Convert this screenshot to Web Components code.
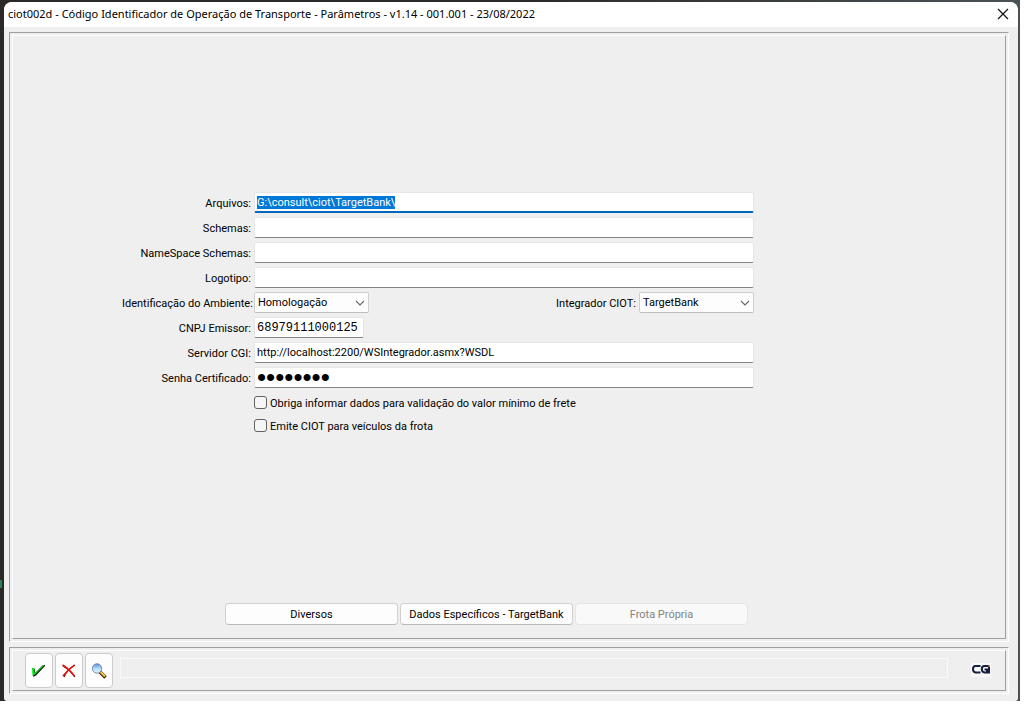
<!DOCTYPE html>
<html lang="pt-BR">
<head>
<meta charset="utf-8">
<title>ciot002d</title>
<style>
  html { background: #fff; }
  body { margin: 0; min-height: 100vh; box-sizing: border-box; padding: 0 4px 5px 0; display: flex; font: 11px/16px Roboto, "Liberation Sans", sans-serif; color: #000; }
  ciot-desktop { flex: 1; }
</style>
</head>
<body>
<ciot-desktop>
  <app-window heading="ciot002d - Código Identificador de Operação de Transporte - Parâmetros - v1.14 - 001.001 - 23/08/2022">
    <params-form></params-form>
    <tool-bar></tool-bar>
  </app-window>
</ciot-desktop>
<script>
const define = (name, html, setup) => customElements.define(name, class extends HTMLElement {
  connectedCallback() {
    if (this.shadowRoot) return;
    const root = this.attachShadow({ mode: 'open' });
    root.innerHTML = html;
    if (setup) setup(this, root);
  }
});

define('ciot-desktop', `
<style>
  :host { display: flex; box-sizing: border-box; padding: 2px 2px 0 4px;
    background: linear-gradient(#2f7f5c, #2f7f5c) 0 580px / 2px 8px no-repeat,
      linear-gradient(90deg, #2b2928 0 50%, #4a5154 99%); }
  ::slotted(*) { flex: 1; }
</style>
<slot></slot>`);

define('app-window', `
<style>
  :host { display: flex; flex-direction: column; min-width: 0; background: #efefef; border-radius: 8px 8px 3px 3px; overflow: hidden; }
  header { display: flex; align-items: center; justify-content: space-between; box-sizing: border-box; height: 25px; background: #fff; padding: 0 9px 1px 4px; }
  h1 { margin: 0; font: 11px/16px "Noto Sans", sans-serif; white-space: nowrap; }
  button { border: 0; padding: 0; background: none; display: flex; width: 12px; height: 12px; }
  main { flex: 1; display: flex; flex-direction: column; gap: 5px; padding: 5px 9px 7px 5px; }
  ::slotted(params-form) { flex: 1; }
</style>
<header><h1></h1>
<button aria-label="Fechar"><svg width="12" height="12" viewBox="0 0 12 12"><path d="M1 1 11 11M11 1 1 11" stroke="#111" stroke-width="1.2"/></svg></button></header>
<main><slot></slot></main>`, (el, root) => root.querySelector('h1').textContent = el.getAttribute('heading'));

define('bevel-panel', `
<style>
  :host { display: flex; box-sizing: border-box; border: 1px solid; border-color: #9f9f9f #fff #fff #9f9f9f; padding: 2px; }
  div { flex: 1; min-width: 0; display: flex; flex-direction: var(--direction, row); border: 1px solid; border-color: #fff #9f9f9f #9f9f9f #fff; }
</style>
<div><slot></slot></div>`);

define('text-field', `
<style>
  :host { display: grid; grid-template-columns: 129px var(--field-width, 1fr); gap: 3px; align-items: center; }
  label { text-align: right; white-space: nowrap; padding-top: 2px; }
  input { box-sizing: border-box; width: 100%; height: 21px; margin: 0; padding: 0 3px 0 2px; border: 1px solid #e6e6e6; border-bottom-color: #858585; border-radius: 2px; background: #fff; font: inherit; color: #000; outline: 0; }
  input:focus { border-bottom: 2px solid #0067c0; }
  input::selection { background: #0078d7; color: #fff; }
  :host([mono]) { --field-width: 110px; }
  :host([mono]) input { font: 12px/16px "Liberation Mono", monospace; }
  input[type=password] { font: 26px/16px "Liberation Sans", sans-serif; }
</style>
<label for="f"></label><input id="f">`, (el, root) => {
  root.querySelector('label').textContent = el.getAttribute('label');
  const input = root.querySelector('input');
  input.type = el.getAttribute('type') || 'text';
  input.value = el.getAttribute('value') || '';
  if (el.hasAttribute('selected')) { input.focus(); input.select(); }
});

define('select-field', `
<style>
  :host { display: grid; grid-template-columns: 129px 115px; gap: 3px; align-items: center; }
  label { text-align: right; white-space: nowrap; padding-top: 2px; }
  span { display: grid; align-items: center; }
  select, svg { grid-area: 1 / 1; }
  select { appearance: none; box-sizing: border-box; height: 21px; width: 100%; margin: 0; padding: 1px 18px 0 3px; border: 1px solid #cfcfcf; border-bottom-color: #bdbdbd; border-radius: 2px; background: #fdfdfd; font: inherit; color: #000; }
  svg { justify-self: end; margin-right: 4px; pointer-events: none; }
</style>
<label for="s"></label><span><select id="s"><option></option></select>
<svg width="10" height="6" viewBox="0 0 10 6"><path d="M1 1 5 5 9 1" fill="none" stroke="#666" stroke-width="1.1"/></svg></span>`, (el, root) => {
  root.querySelector('label').textContent = el.getAttribute('label');
  root.querySelector('option').textContent = el.getAttribute('value');
});

define('check-field', `
<style>
  :host { display: block; padding-left: 132px; }
  label { display: flex; align-items: center; gap: 3px; height: 23px; }
  span { padding-top: 2px; }
  input { appearance: none; box-sizing: border-box; width: 13px; height: 13px; margin: 0; border: 1px solid #626262; border-radius: 3px; background: #f6f6f6; }
</style>
<label><input type="checkbox"><span><slot></slot></span></label>`);

define('push-button', `
<style>
  :host { display: block; }
  button { box-sizing: border-box; width: 100%; height: 22px; margin: 0; padding: 2px 0 0; border: 1px solid #d0d0d0; border-bottom-color: #b9b9b9; border-radius: 4px; background: #fdfdfd; font: inherit; color: #000; white-space: nowrap; }
  button:disabled { border-color: #e5e5e5; background: #f9f9f9; color: #838383; }
</style>
<button><slot></slot></button>`, (el, root) => root.querySelector('button').disabled = el.hasAttribute('disabled'));

define('params-form', `
<style>
  :host { display: flex; }
  bevel-panel { flex: 1; --direction: column; }
  form { display: flex; flex-direction: column; gap: 4px; max-width: 632px; margin: 156px 0 0 109px; }
  .pair { display: flex; justify-content: space-between; }
  .checks { margin-top: -1px; }
  nav { display: grid; grid-template-columns: repeat(3, 173px); gap: 2px; margin: auto 0 13px 212px; }
</style>
<bevel-panel>
  <form>
    <text-field label="Arquivos:" value="G:\\consult\\ciot\\TargetBank\\" selected></text-field>
    <text-field label="Schemas:"></text-field>
    <text-field label="NameSpace Schemas:"></text-field>
    <text-field label="Logotipo:"></text-field>
    <div class="pair">
      <select-field label="Identificação do Ambiente:" value="Homologação"></select-field>
      <select-field label="Integrador CIOT:" value="TargetBank"></select-field>
    </div>
    <text-field label="CNPJ Emissor:" value="68979111000125" mono></text-field>
    <text-field label="Servidor CGI:" value="http://localhost:2200/WSIntegrador.asmx?WSDL"></text-field>
    <text-field label="Senha Certificado:" type="password" value="12345678"></text-field>
    <div class="checks">
      <check-field>Obriga informar dados para validação do valor mínimo de frete</check-field>
      <check-field>Emite CIOT para veículos da frota</check-field>
    </div>
  </form>
  <nav>
    <push-button>Diversos</push-button>
    <push-button>Dados Específicos - TargetBank</push-button>
    <push-button disabled>Frota Própria</push-button>
  </nav>
</bevel-panel>`);

define('tool-bar', `
<style>
  :host { display: block; }
  .bar { flex: 1; display: flex; align-items: center; gap: 2px; padding: 2px 14px 2px 12px; }
  button { display: grid; place-items: center; box-sizing: border-box; width: 28px; height: 35px; margin: 0; padding: 0; border: 1px solid #cbcbcb; border-radius: 4px; background: #fdfdfd; }
  output { flex: 1; height: 18px; margin: 0 21px 6px 5px; border: 1px solid #f9f9f9; }
</style>
<bevel-panel><div class="bar">
  <button aria-label="Confirmar"><svg width="16" height="16" viewBox="0 0 16 16"><path d="M2 6h2v4l8-8h2v1L5 12.500l-2 1H2z" fill="#111"/><path d="M1 5h2.500v4.500h1L12 2h1.500L4 11.500l-1.500 1H1.500z" fill="#00e413"/></svg></button>
  <button aria-label="Cancelar"><svg width="16" height="16" viewBox="0 0 16 16"><path d="M2 3c4 2 8 6 12 11M14 2C9 5 5 9 3 14" fill="none" stroke="#5b0808" stroke-width="1.200"/><path d="M1.500 2c4 2 8 6 12 11M13.500 2C9 5 5 9 2 13" fill="none" stroke="#f00c0c" stroke-width="1.500"/></svg></button>
  <button aria-label="Pesquisar"><svg width="16" height="16" viewBox="0 0 16 16"><defs><linearGradient id="lens" x2="0" y2="1"><stop stop-color="#4f91df"/><stop offset=".5" stop-color="#b6daf8"/><stop offset="1" stop-color="#e9f9ff"/></linearGradient></defs><path d="m9 9 5.500 5.500" stroke="#33210d" stroke-width="3.600"/><path d="m9.500 9 4.500 4.500" stroke="#e9a62e" stroke-width="2.200"/><path d="m10 9 4 4" stroke="#ffe08a"/><circle cx="6" cy="5.500" r="4.700" fill="url(#lens)" stroke="#738ca9"/></svg></button>
  <output></output>
  <svg width="20" height="15" viewBox="0 0 20 15" role="img" aria-label="CGI"><path fill="#f8f8f8" d="M0 0h20v14H0z"/><path d="M9.500 3H4.500Q2 3 2 6T4.500 9.500H9.500M19 3H13.500Q10.800 3 10.800 6T13.500 9.500H16V6.500H13.500" fill="none" stroke="#17203f" stroke-width="2"/><path d="M17 4h2v6.500h-2z" fill="#17203f"/><path d="M17.500 2H19v2h-1.500z" fill="#ef7d3a"/></svg>
</div></bevel-panel>`);
</script>
</body>
</html>
